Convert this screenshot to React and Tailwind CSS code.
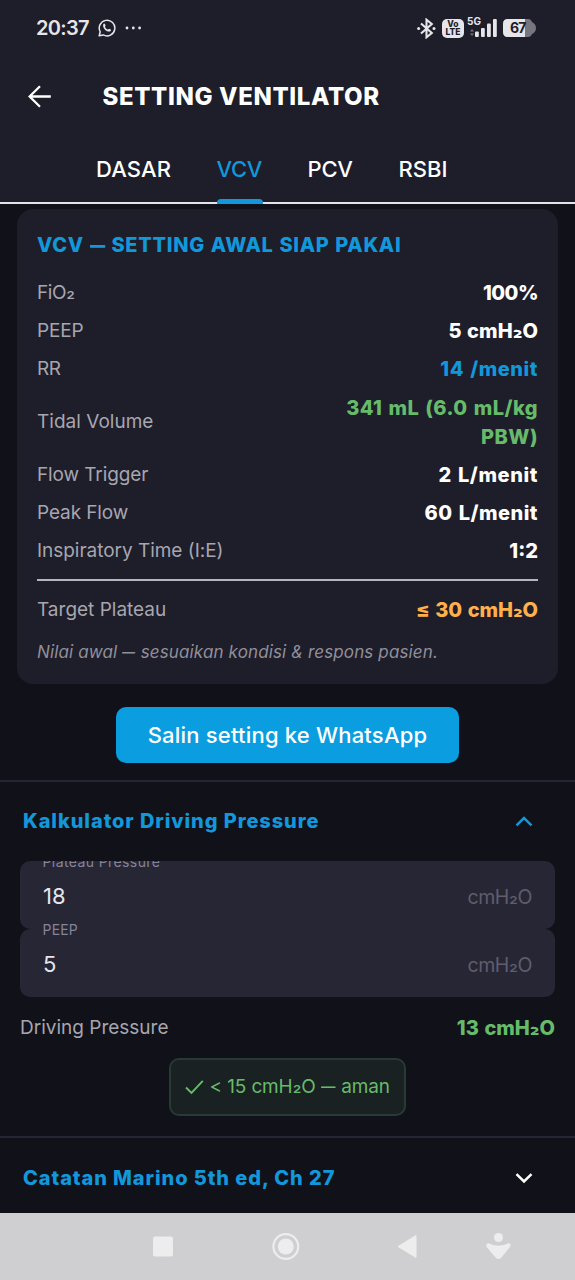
import React from "react";

const Sub = () => <span className="relative -top-[0.14em] text-[1.04em] leading-none">₂</span>;

const Dash = () => (
  <span className="inline-block w-[0.8em]">
    <span className="inline-block origin-left scale-x-[0.76]">—</span>
  </span>
);

const rows = [
  { k: <>FiO<Sub /></>, ks: "tracking-[-0.4px]", v: "100%", vs: "tracking-[-0.5px] text-white" },
  { k: "PEEP", ks: "tracking-[-0.2px]", v: <>5 cmH<Sub />O</>, vs: "tracking-[0.05px] text-white" },
  { k: "RR", ks: "tracking-[-0.6px]", v: "14 /menit", vs: "tracking-[0.55px] text-[#1298da]" },
  { k: "Tidal Volume", ks: "tracking-[0.02px]", v: "341 mL (6.0 mL/kg PBW)", vs: "tracking-[0.46px] text-[#66bb6a]" },
  { k: "Flow Trigger", ks: "tracking-[-0.1px]", v: "2 L/menit", vs: "tracking-[0.6px] text-white" },
  { k: "Peak Flow", ks: "tracking-[-0.1px]", v: "60 L/menit", vs: "tracking-[0.5px] text-white" },
  { k: "Inspiratory Time (I:E)", ks: "tracking-[-0.03px]", v: "1:2", vs: "tracking-[0px] text-white" },
];

function Row({ k, ks, v, vs }) {
  return (
    <div className="flex items-center justify-between py-[4.45px] leading-[29.3px]">
      <span className={`relative -top-px text-[19px] text-[#a7a6af] ${ks}`}>{k}</span>
      <span className={`w-[200px] text-right text-[20px] font-extrabold [word-spacing:1.2px] ${vs}`}>{v}</span>
    </div>
  );
}

function StatusBar() {
  return (
    <div className="flex h-14 items-center pl-9 pr-[39px] text-[#e6e5ea]">
      <span className="text-[20px] font-semibold tracking-[-0.7px]">20:37</span>
      <svg className="ml-[9px]" width="18" height="18" viewBox="0 0 18 18" fill="none" stroke="currentColor" strokeWidth="1.5">
        <path d="M1.2 16.8l1-4A7.8 7.8 0 1 1 5.3 15.9z" strokeLinejoin="round" />
        <path d="M5.3 5.2c.5-.9 1.3-.7 1.6-.1l.7 1.5c.1.5-.6.9-.6 1.3.5 1.2 1.5 2.1 2.8 2.6.5.1.9-.9 1.3-.8l1.6.8c.5.3.3 1.5-.6 1.9-1.3.6-3.3-.1-4.8-1.5C5.7 9.5 4.5 7 5.3 5.2z" fill="currentColor" stroke="none" />
      </svg>
      <svg className="ml-[9px]" width="17" height="4" viewBox="0 0 17 4" fill="currentColor">
        <circle cx="2" cy="2" r="1.4" /><circle cx="8.3" cy="2" r="1.4" /><circle cx="14.6" cy="2" r="1.4" />
      </svg>
      <div className="ml-auto flex items-center">
        <svg className="mr-[2px]" width="19" height="21" viewBox="0 0 19 21" fill="none" stroke="currentColor" strokeWidth="2.1">
          <path d="M4 5.5l10.8 9.5-5.3 4.3V1.7L14.8 6 4 15.5" />
          <circle cx="1.6" cy="10.5" r="1.5" fill="currentColor" stroke="none" />
          <circle cx="17" cy="10.5" r="1.5" fill="currentColor" stroke="none" />
        </svg>
        <span className="ml-[4px] mr-px flex h-[19px] w-[22px] flex-col items-center justify-center rounded-[5px] bg-[#e6e5ea] text-[8.5px] font-extrabold leading-[8.5px] text-[#1e1d2a]">
          <span className="block h-[8.5px]">Vo</span>
          <span className="block h-[8.5px]">LTE</span>
        </span>
        <div className="relative ml-[4px] h-[20px] w-[30px]">
          <span className="absolute -left-[2px] -top-[2px] text-[10px] font-bold leading-[10px]">5G</span>
          <svg width="30" height="20" viewBox="0 0 30 20" fill="currentColor">
            <path d="M1 13.5l2-2.5 2 2.5zM1 15.5l2 2.5 2-2.5z" opacity=".45" />
            <rect x="6" y="13.5" width="3.8" height="5.5" rx="1" />
            <rect x="12" y="10" width="3.8" height="9" rx="1" />
            <rect x="18" y="5.5" width="3.8" height="13.5" rx="1" />
            <rect x="24" y="1" width="3.8" height="18" rx="1" />
          </svg>
        </div>
        <div className="relative ml-[4px] h-[18px] w-[33px]">
          <svg width="33" height="18" viewBox="0 0 33 18">
            <path d="M5 0H25q3 0 4 3 4 2 4 6t-4 6q-1 3-4 3H5q-5 0-5-5V5q0-5 5-5z" fill="#77767f" />
            <path d="M5 0H22V18H5q-5 0-5-5V5q0-5 5-5z" fill="#e6e5ea" />
          </svg>
          <span className="absolute left-[7px] top-0 text-[14px] font-bold leading-[18px] tracking-[-0.9px] text-[#1e1d2a]">67</span>
        </div>
      </div>
    </div>
  );
}

function Field({ label, value, ls }) {
  return (
    <div className="relative flex h-[68px] items-center justify-between rounded-[10px] bg-[#272635] px-[23px] pt-[5px]">
      <span className={`absolute left-[22.5px] -top-[9px] text-[14px] leading-[20px] text-[#85839a] ${ls}`}>{label}</span>
      <span className="relative -top-px text-[22px] text-[#e6e5ec]">{value}</span>
      <span className="text-[19.5px] tracking-[-0.4px] text-[#5f5d6e]">cmH<Sub />O</span>
    </div>
  );
}

function Chevron({ up, className }) {
  return (
    <svg className={className} width="18" height="12" viewBox="0 0 18 12" fill="none" stroke="currentColor" strokeWidth="2.5">
      <path d={up ? "M1.5 9.3L9 2l7.5 7.3" : "M1.5 2.2L9 9.5l7.5-7.3"} />
    </svg>
  );
}

export default function App() {
  return (
    <div className="flex h-[1280px] w-[575px] flex-col overflow-hidden bg-[#11111a] font-['Inter','Liberation_Sans',sans-serif]">
      <header className="h-[204px] shrink-0 border-b-2 border-[#e4e3ea] bg-[#1e1d2a]">
        <StatusBar />
        <div className="flex h-20 items-center pl-7">
          <svg width="24" height="24" viewBox="0 0 24 24" fill="none" stroke="white" strokeWidth="2.3">
            <path d="M22.8 12.5H1.8M12 2.2L1.6 12.5 12 22.8" />
          </svg>
          <h1 className="relative top-px ml-[50.5px] text-[24px] font-extrabold tracking-[0.63px] text-white">SETTING VENTILATOR</h1>
        </div>
        <nav className="flex h-[68px] pl-[96px] text-[22px] font-medium leading-[66px] text-white">
          <span className="w-[120.5px] tracking-[0.1px]">DASAR</span>
          <span className="relative mr-[45px] w-[46px] tracking-[-0.4px] text-[#1298da]">
            VCV
            <i className="absolute bottom-0 left-0 h-[5px] w-[46px] rounded-t-[4px] bg-[#1298da]" />
          </span>
          <span className="w-[91px] tracking-[-0.2px]">PCV</span>
          <span className="tracking-[0px]">RSBI</span>
        </nav>
      </header>

      <section className="mx-[17px] mt-[5px] h-[475px] shrink-0 rounded-[16px] bg-[#1e1d2a] px-5 pt-[21px]">
        <h2 className="mb-[14.6px] whitespace-nowrap text-[20px] font-extrabold leading-[30px] tracking-[0.7px] text-[#1298da] [word-spacing:0.7px]">VCV <Dash /> SETTING AWAL SIAP PAKAI</h2>
        {rows.map((r, i) => <Row key={i} {...r} />)}
        <div className="mb-[10px] mt-[8px] h-[2px] bg-[#b5b4c2]" />
        <Row k="Target Plateau" ks="tracking-[0px]" v={<>≤ 30 cmH<Sub />O</>} vs="tracking-[-0.05px] text-[#ffb04a]" />
        <p className="mt-[9px] whitespace-nowrap text-[17px] italic leading-[28px] tracking-[0.13px] text-[#918f99]">Nilai awal <Dash /> sesuaikan kondisi &amp; respons pasien.</p>
      </section>

      <button className="mt-[23px] h-[56px] w-[343px] shrink-0 self-center rounded-[10px] bg-[#0a9ddf] text-[22px] font-medium tracking-[0.2px] text-white">Salin setting ke WhatsApp</button>

      <section className="mt-[17px] h-[356px] shrink-0 border-t-2 border-[#272534]">
        <div className="flex h-[79px] items-center justify-between pl-[23px] pr-[42px] text-[#1298da]">
          <h3 className="relative -top-px text-[20px] font-extrabold tracking-[0.92px]">Kalkulator Driving Pressure</h3>
          <Chevron up />
        </div>
        <div className="mx-5 overflow-hidden">
          <Field label="Plateau Pressure" value="18" ls="tracking-[0.4px]" />
          <Field label="PEEP" value="5" ls="tracking-[0.2px]" />
        </div>
        <div className="mx-5 mt-[15px] flex h-[32px] items-center justify-between">
          <span className="text-[19px] text-[#a7a6af]">Driving Pressure</span>
          <span className="text-[20px] font-extrabold text-[#66bb6a] [word-spacing:1.2px]">13 cmH<Sub />O</span>
        </div>
        <div className="mx-auto mt-[14px] flex h-[58px] w-[237px] items-center rounded-[10px] border-2 border-[#273a33] bg-[#1a2123] pl-[14px] text-[#66bb6a]">
          <svg width="19" height="16" viewBox="0 0 19 16" fill="none" stroke="currentColor" strokeWidth="1.9"><path d="M1 8.5l5.5 5.5L17.8 1.8" /></svg>
          <span className="ml-[5.5px] whitespace-nowrap text-[19px] tracking-[-0.13px]">&lt; 15 cmH<Sub />O <Dash /> aman</span>
        </div>
      </section>

      <section className="flex h-[77px] shrink-0 items-center justify-between border-t-2 border-[#272534] pl-[23px] pr-[42px] pt-[5px]">
        <h3 className="text-[20px] font-extrabold tracking-[0.92px] text-[#1298da]">Catatan Marino 5th ed, Ch 27</h3>
        <Chevron className="text-white" />
      </section>

      <footer className="h-[67px] shrink-0 bg-[#cfcfd1]">
        <svg width="575" height="67" viewBox="0 0 575 67" fill="#ededee">
          <rect x="153" y="23.5" width="20" height="20" rx="2" />
          <circle cx="285.8" cy="33.5" r="12.4" fill="none" stroke="#ededee" strokeWidth="2.2" />
          <circle cx="285.8" cy="33.5" r="8" />
          <path d="M398 33.5L416 22.5V44.5z" stroke="#ededee" strokeLinejoin="round" />
          <circle cx="498.5" cy="24.5" r="4.5" />
          <path d="M488 30q10.5 5.5 21 0 3 2 .5 4.5L501 45q-2.5 2-5 0L487 34.5Q485 32 488 30z" />
        </svg>
      </footer>
    </div>
  );
}
